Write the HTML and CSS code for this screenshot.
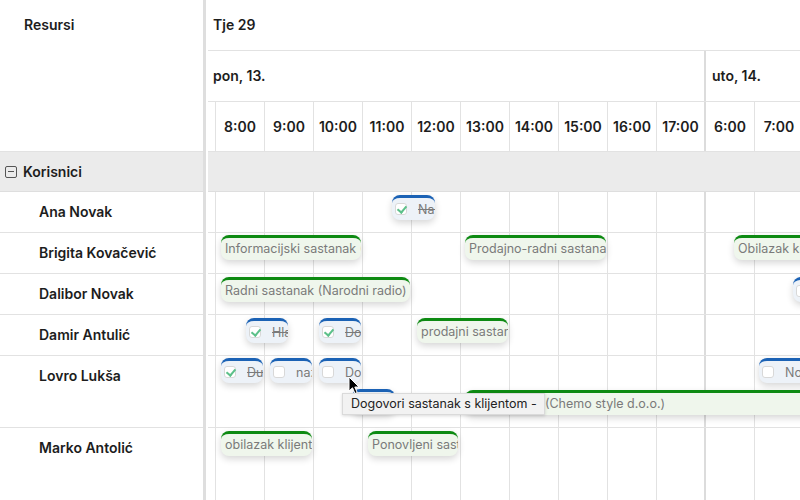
FILE: index.html
```html
<!DOCTYPE html>
<html lang="hr">

<head>
    <meta charset="utf-8" />
    <meta name="viewport" content="width=device-width, initial-scale=1.0" />
    <title>Resursi - raspored</title>
    <link rel="stylesheet" href="styles.css">
</head>

<body>
    <div class="scheduler">
        <!-- lijevi stupac: resursi -->
        <div class="resources">
            <div class="res-header">Resursi</div>
            <div class="res-group"><span class="toggle"></span>Korisnici</div>
            <div class="res-row">Ana Novak</div>
            <div class="res-row">Brigita Kovačević</div>
            <div class="res-row">Dalibor Novak</div>
            <div class="res-row">Damir Antulić</div>
            <div class="res-row tall">Lovro Lukša</div>
            <div class="res-row last">Marko Antolić</div>
        </div>
        <div class="splitter"></div>
        <!-- desno: vremenska os -->
        <div class="timeline">
            <div class="tl-month">Tje 29</div>
            <div class="tl-days">
                <div class="tl-day first">pon, 13.</div>
                <div class="tl-day">uto, 14.</div>
            </div>
            <div class="tl-hours">
                <div class="hour cut"></div>
                <div class="hour">8:00</div>
                <div class="hour">9:00</div>
                <div class="hour">10:00</div>
                <div class="hour">11:00</div>
                <div class="hour">12:00</div>
                <div class="hour">13:00</div>
                <div class="hour">14:00</div>
                <div class="hour">15:00</div>
                <div class="hour">16:00</div>
                <div class="hour day-end">17:00</div>
                <div class="hour">6:00</div>
                <div class="hour">7:00</div>
                <div class="hour">8:00</div>
            </div>
            <div class="tl-group"></div>

            <div class="tl-row">
                <div class="task" style="left:184px;top:3px;width:43px"><span class="check on"></span><span class="label done">Nazvati klijenta</span></div>
            </div>
            <div class="tl-row">
                <div class="event" style="left:13px;top:2px;width:140px">Informacijski sastanak (Petrol d.d.)</div>
                <div class="event" style="left:257px;top:2px;width:141px">Prodajno-radni sastanak</div>
                <div class="event" style="left:526px;top:2px;width:120px">Obilazak klijenta</div>
            </div>
            <div class="tl-row">
                <div class="event" style="left:13px;top:3px;width:189px">Radni sastanak (Narodni radio)</div>
                <div class="task" style="left:585px;top:3px;width:60px"><span class="check"></span><span class="label">Nazvati</span></div>
            </div>
            <div class="tl-row">
                <div class="task" style="left:38px;top:3px;width:42px"><span class="check on"></span><span class="label done">Hladni poziv</span></div>
                <div class="task" style="left:111px;top:3px;width:42px"><span class="check on"></span><span class="label done">Dostava ponude</span></div>
                <div class="event" style="left:209px;top:3px;width:91px">prodajni sastanak</div>
            </div>
            <div class="tl-row tall">
                <div class="task" style="left:13px;top:2px;width:42px"><span class="check on"></span><span class="label done">Dugovanja</span></div>
                <div class="task" style="left:62px;top:2px;width:42px"><span class="check"></span><span class="label">nazvati</span></div>
                <div class="task" style="left:111px;top:2px;width:42px"><span class="check"></span><span class="label">Dogovori sastanak s klijentom</span></div>
                <div class="task" style="left:551px;top:2px;width:60px"><span class="check"></span><span class="label">Novi upit</span></div>
                <div class="task" style="left:144px;top:33px;width:43px"><span class="check"></span><span class="label">Ponuda</span></div>
                <div class="event" style="left:257px;top:34px;width:400px">Prezentacija (Chemo style d.o.o.)</div>
            </div>
            <div class="tl-row last">
                <div class="event" style="left:13px;top:3px;width:91px">obilazak klijenta</div>
                <div class="event" style="left:160px;top:3px;width:90px">Ponovljeni sastanak</div>
            </div>
        </div>

        <div class="tooltip">Dogovori sastanak s klijentom -</div>
        <svg class="cursor" width="12" height="19" viewBox="0 0 12 19">
            <path d="M1 1 L1 15 L4.5 11.8 L7 17.5 L9.2 16.5 L6.8 11 L11 11 Z" fill="#000" stroke="#fff" stroke-width="1" stroke-linejoin="round"/>
        </svg>
    </div>
</body>

</html>
```

FILE: styles.css
```css
* {
    box-sizing: border-box;
}
body {
    margin: 0;
    font-family: Inter, "Liberation Sans", sans-serif;
    color: #1d1d1d;
    background-color: #fff;
    overflow: hidden;
}
.scheduler {
    position: relative;
    display: flex;
    width: 800px;
    height: 500px;
    overflow: hidden;
}
/* resursi */
.resources {
    width: 203px;
    flex: none;
    font-size: 14px;
    font-weight: 600;
}
.res-header {
    height: 152px;
    line-height: 50px;
    padding-left: 24px;
    border-bottom: 1px solid #e2e2e2;
}
.res-group {
    display: flex;
    align-items: center;
    height: 40px;
    padding-left: 5px;
    background-color: #ebebeb;
    border-bottom: 1px solid #dedede;
}
.res-group .toggle {
    position: relative;
    width: 12px;
    height: 12px;
    margin-right: 6px;
    border: 1px solid #555;
    border-radius: 2px;
}
.res-group .toggle::after {
    content: '';
    position: absolute;
    left: 2px;
    right: 2px;
    top: 4px;
    height: 1px;
    background-color: #555;
}
.res-row {
    height: 41px;
    line-height: 40px;
    padding-left: 39px;
    border-bottom: 1px solid #e2e2e2;
}
.res-row.tall,
.tl-row.tall {
    height: 72px;
}
.res-row.last,
.tl-row.last {
    height: 80px;
    border-bottom: none;
}
.splitter {
    width: 5px;
    flex: none;
    border-left: 3px solid #dedede;
}
/* vremenska os */
.timeline {
    flex: 1;
    min-width: 0;
    overflow: hidden;
    font-size: 14px;
}
.tl-month {
    height: 51px;
    line-height: 50px;
    padding-left: 5px;
    font-weight: 600;
    border-bottom: 1px solid #e2e2e2;
}
.tl-days {
    display: flex;
    height: 51px;
    border-bottom: 1px solid #e2e2e2;
}
.tl-day {
    flex: none;
    width: 300px;
    line-height: 50px;
    padding-left: 6px;
    font-weight: 600;
}
.tl-day.first {
    width: 498px;
    padding-left: 5px;
    border-right: 2px solid #dcdcdc;
}
.tl-hours {
    display: flex;
    height: 50px;
    border-bottom: 1px solid #e2e2e2;
}
.hour {
    flex: none;
    width: 49px;
    line-height: 49px;
    text-align: center;
    font-weight: 600;
    border-right: 1px solid #e2e2e2;
    white-space: nowrap;
}
.hour.cut {
    width: 8px;
}
.hour.day-end {
    border-right: 2px solid #dcdcdc;
}
.tl-group {
    height: 40px;
    background-color: #ebebeb;
    border-bottom: 1px solid #dedede;
}
.tl-row {
    position: relative;
    height: 41px;
    border-bottom: 1px solid #e2e2e2;
    background-image: linear-gradient(#dcdcdc, #dcdcdc), linear-gradient(to right, transparent 48px, #e2e2e2 48px);
    background-size: 2px 100%, 49px 100%;
    background-position: 496px 0, 8px 0;
    background-repeat: no-repeat, repeat-x;
}
/* dogadaji i zadaci */
.event,
.task {
    position: absolute;
    height: 25px;
    line-height: 21px;
    border-top: 3px solid #0d8a12;
    border-radius: 8px;
    background-color: #eff6ec;
    box-shadow: 0 3px 7px rgba(0, 0, 0, 0.16);
    font-size: 12.5px;
    color: #7a7a7a;
    white-space: nowrap;
    overflow: hidden;
}
.event {
    padding-left: 4px;
}
.task {
    display: flex;
    align-items: center;
    padding-left: 3px;
    border-top-color: #1b62b5;
    background-color: #edf2f8;
}
.task .check {
    position: relative;
    flex: none;
    width: 12px;
    height: 12px;
    margin-right: 11px;
    border: 1px solid #d8d8d8;
    border-radius: 3px;
    background-color: #fff;
}
.task .check.on::after {
    content: '';
    position: absolute;
    left: 3px;
    top: 0;
    width: 4px;
    height: 7px;
    border-right: 2px solid #5cc08a;
    border-bottom: 2px solid #5cc08a;
    transform: rotate(40deg);
}
.task .label.done {
    text-decoration: line-through;
}
.tooltip {
    position: absolute;
    left: 342px;
    top: 393px;
    width: 203px;
    height: 22px;
    line-height: 20px;
    padding-left: 8px;
    font-size: 12.5px;
    color: #222;
    background-color: #f2f2f2;
    border: 1px solid #dadada;
    box-shadow: 0 1px 3px rgba(0, 0, 0, 0.15);
    white-space: nowrap;
    z-index: 10;
}
.cursor {
    position: absolute;
    left: 348px;
    top: 376px;
    z-index: 11;
}
```
